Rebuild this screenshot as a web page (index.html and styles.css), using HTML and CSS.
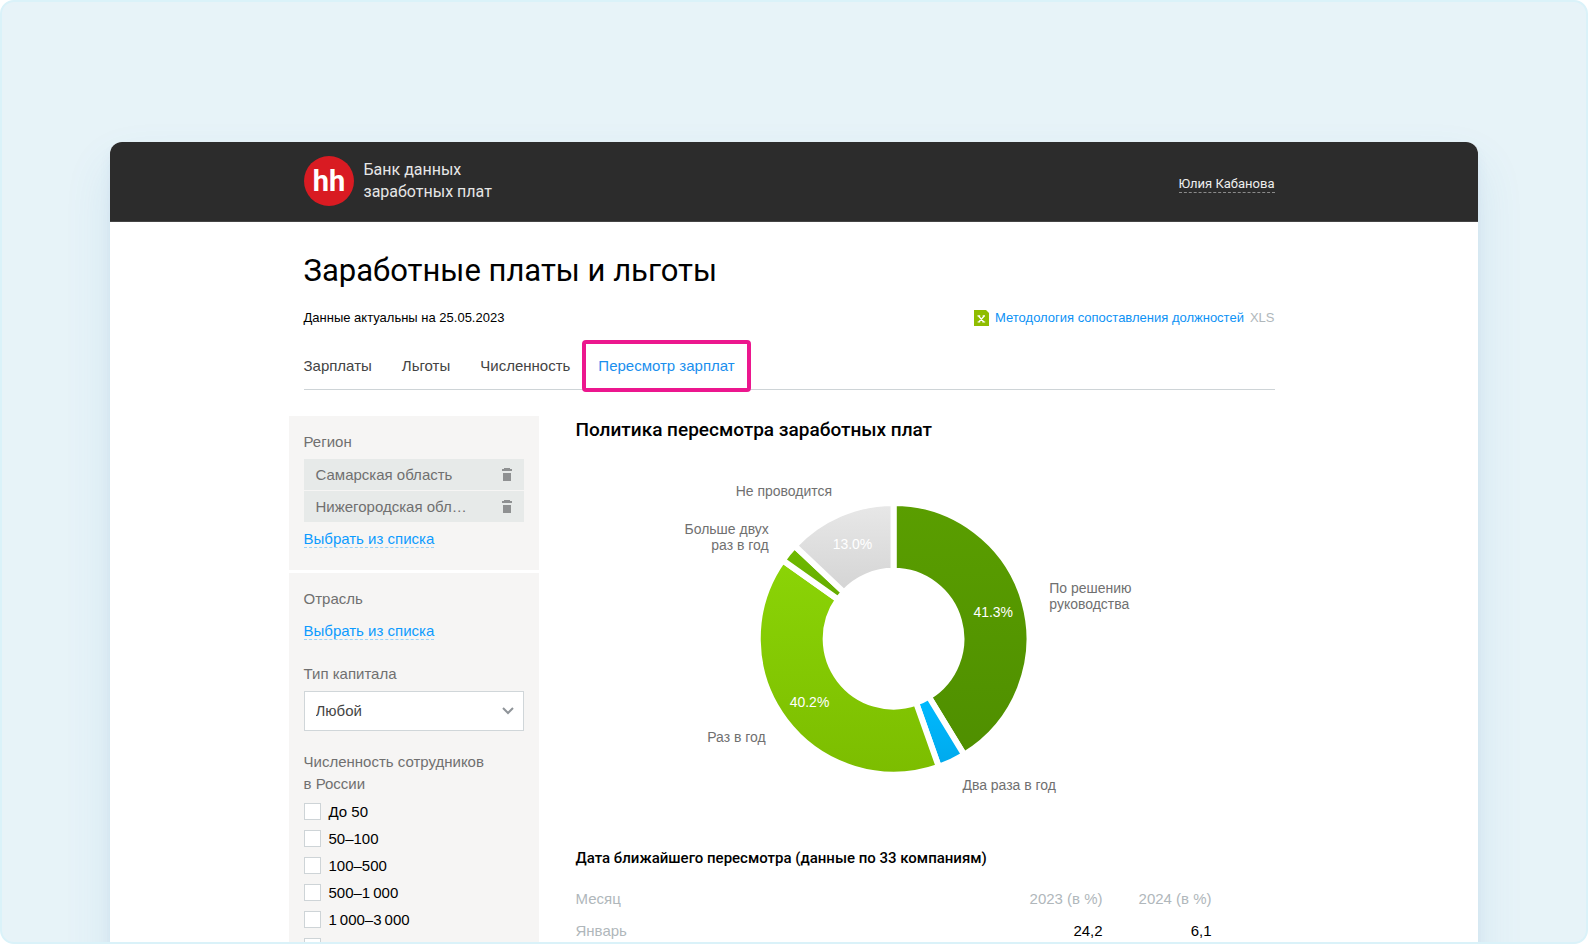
FILE: index.html
```html
<!DOCTYPE html>
<html lang="ru">
<head>
<meta charset="utf-8">
<meta name="viewport" content="width=device-width, initial-scale=1">
<title>Банк данных заработных плат</title>
<link rel="stylesheet" href="styles.css">
</head>
<body>
<div class="stage">
  <div class="window">
    <header class="topbar">
      <div class="topbar-inner">
        <a class="brand" href="#">
          <svg class="brand-logo" viewBox="0 0 50 50" aria-hidden="true">
            <circle cx="25" cy="25" r="25" fill="#d91b22"/>
            <text x="25" y="35" text-anchor="middle" class="brand-mark">hh</text>
          </svg>
          <span class="brand-name">Банк данных<br>заработных плат</span>
        </a>
        <a class="user" href="#">Юлия Кабанова</a>
      </div>
    </header>

    <div class="page">
      <h1 class="title">Заработные платы и льготы</h1>
      <div class="meta">
        <span>Данные актуальны на 25.05.2023</span>
        <div class="method">
          <svg class="xls-icon" viewBox="0 0 15 16" aria-hidden="true">
            <path d="M0 0H12L15 3V16H0Z" fill="#8fbd00"/>
            <path d="M4.500 6L9.800 12M10.200 6L4.800 12M3.500 5.800H6.200M8.700 5.800H11M3.600 12H6.200M8.300 12H11.200" fill="none" stroke="#fff" stroke-width="1.200"/>
          </svg>
          <a class="method-link" href="#">Методология сопоставления должностей</a>
          <span class="method-type">XLS</span>
        </div>
      </div>

      <nav class="tabs">
        <a class="tab" href="#">Зарплаты</a>
        <a class="tab" href="#">Льготы</a>
        <a class="tab" href="#">Численность</a>
        <a class="tab tab-active" href="#" aria-current="page">Пересмотр зарплат</a>
      </nav>

      <div class="columns">
        <aside class="filters">
          <section class="panel">
            <h3 class="filter-title">Регион</h3>
            <ul class="chips">
              <li class="chip"><span class="chip-text">Самарская область</span>
                <button class="chip-remove" type="button" aria-label="Удалить"><svg viewBox="0 0 10 13" width="10" height="13"><path d="M0 1H2V0H8V1H10V3H0ZM1 5H9V13H1Z" fill="#8f9192"/></svg></button></li>
              <li class="chip"><span class="chip-text">Нижегородская обл…</span>
                <button class="chip-remove" type="button" aria-label="Удалить"><svg viewBox="0 0 10 13" width="10" height="13"><path d="M0 1H2V0H8V1H10V3H0ZM1 5H9V13H1Z" fill="#8f9192"/></svg></button></li>
            </ul>
            <a class="pick" href="#">Выбрать из списка</a>
          </section>
          <section class="panel">
            <h3 class="filter-title">Отрасль</h3>
            <a class="pick" href="#">Выбрать из списка</a>
            <label class="filter-title select-title" for="capital">Тип капитала</label>
            <div class="select-wrap">
              <select class="select" id="capital"><option>Любой</option></select>
              <svg class="select-arrow" viewBox="0 0 12 8" aria-hidden="true"><path d="M1 1L6 6L11 1" fill="none" stroke="#8f9499" stroke-width="2"/></svg>
            </div>
            <fieldset class="sizes">
              <legend class="sizes-title">Численность сотрудников<br>в России</legend>
              <label class="check"><input class="box" type="checkbox">До 50</label>
              <label class="check"><input class="box" type="checkbox">50–100</label>
              <label class="check"><input class="box" type="checkbox">100–500</label>
              <label class="check"><input class="box" type="checkbox">500–1&#8201;000</label>
              <label class="check"><input class="box" type="checkbox">1&#8201;000–3&#8201;000</label>
              <label class="check"><input class="box" type="checkbox">3&#8201;000–10&#8201;000</label>
            </fieldset>
          </section>
        </aside>

        <main class="main">
          <h2 class="chart-title">Политика пересмотра заработных плат</h2>
          <svg class="chart" viewBox="0 0 700 360" role="img" aria-label="Политика пересмотра заработных плат">
            <defs>
              <linearGradient id="g-dark" x1="0" y1="0" x2="0" y2="1"><stop offset="0" stop-color="#5a9e00"/><stop offset="1" stop-color="#4f8f00"/></linearGradient>
              <linearGradient id="g-blue" x1="0" y1="0" x2="0" y2="1"><stop offset="0" stop-color="#00baff"/><stop offset="1" stop-color="#00a9ec"/></linearGradient>
              <linearGradient id="g-light" x1="0" y1="0" x2="0" y2="1"><stop offset="0" stop-color="#8bd406"/><stop offset="1" stop-color="#7cbd00"/></linearGradient>
              <linearGradient id="g-green" x1="0" y1="0" x2="0" y2="1"><stop offset="0" stop-color="#70bb00"/><stop offset="1" stop-color="#64ab00"/></linearGradient>
              <linearGradient id="g-gray" x1="0" y1="0" x2="0" y2="1"><stop offset="0" stop-color="#e8e8e8"/><stop offset="1" stop-color="#d4d4d4"/></linearGradient>
            </defs>
            <g transform="translate(318 179)" stroke="#fff" stroke-width="6">
              <path fill="url(#g-dark)" d="M0-136A136 136 0 0 1 70.700 116.200L35.300 58.100A68 68 0 0 0 0-68Z"/>
              <path fill="url(#g-blue)" d="M70.700 116.200A136 136 0 0 1 45.300 128.200L22.600 64.100A68 68 0 0 0 35.300 58.100Z"/>
              <path fill="url(#g-light)" d="M45.300 128.200A136 136 0 0 1-111-78.600L-55.500-39.300A68 68 0 0 0 22.600 64.100Z"/>
              <path fill="url(#g-green)" d="M-111-78.600A136 136 0 0 1-99.100-93.100L-49.600-46.500A68 68 0 0 0-55.500-39.300Z"/>
              <path fill="url(#g-gray)" d="M-99.100-93.100A136 136 0 0 1 0-136L0-68A68 68 0 0 0-49.600-46.500Z"/>
            </g>
            <g class="share">
              <text x="257" y="89">13.0%</text>
              <text x="398" y="157">41.3%</text>
              <text x="214" y="247">40.2%</text>
            </g>
            <g class="label">
              <text x="160" y="36">Не проводится</text>
              <text x="193" y="74" text-anchor="end">Больше двух</text>
              <text x="193" y="90" text-anchor="end">раз в год</text>
              <text x="190" y="282" text-anchor="end">Раз в год</text>
              <text x="474" y="133">По решению</text>
              <text x="474" y="149">руководства</text>
              <text x="387" y="330">Два раза в год</text>
            </g>
          </svg>

          <h3 class="table-title">Дата ближайшего пересмотра (данные по 33 компаниям)</h3>
          <table class="months">
            <thead><tr><th class="month">Месяц</th><th class="num">2023 (в %)</th><th class="num">2024 (в %)</th></tr></thead>
            <tbody><tr><th class="month">Январь</th><td class="num">24,2</td><td class="num">6,1</td></tr></tbody>
          </table>
        </main>
      </div>
    </div>
  </div>
</div>
</body>
</html>
```
FILE: styles.css
```css
* { box-sizing: border-box; }

body {
  margin: 0;
  background: #fff;
  color: #000;
  font: 15px/22px "Liberation Sans", Arial, sans-serif;
}

a { text-decoration: none; }
h1, h2, h3, ul, fieldset { margin: 0; padding: 0; }

.stage {
  height: 100vh;
  overflow: hidden;
  padding: 140px 108px 0;
  border: 2px solid #daf2f9;
  border-radius: 14px;
  background: #e7f3f8;
}

.window {
  min-height: 100%;
  border-radius: 12px 12px 0 0;
  background: #fff;
  box-shadow: 0 24px 48px rgba(60, 140, 190, 0.12), 0 8px 12px rgba(80, 110, 190, 0.07);
}

.topbar {
  border-bottom: 1px solid #444;
  border-radius: 12px 12px 0 0;
  background: #2c2c2c;
}

.topbar-inner,
.page {
  max-width: 981px;
  margin: 0 auto;
  padding-right: 10px;
}

.topbar-inner {
  display: flex;
  align-items: center;
  justify-content: space-between;
  height: 79px;
}

.brand {
  display: flex;
  align-items: center;
  gap: 10px;
  margin-bottom: 2px;
  color: #e6e6e6;
  font: 16px/22px Roboto, sans-serif;
}

.brand-logo { width: 50px; height: 50px; }
.brand-mark { fill: #fff; font: 700 29px Roboto, sans-serif; }

.user {
  margin-top: 6px;
  border-bottom: 1px dashed #8a8a8a;
  color: #eee;
  font: 13px/16px Roboto, sans-serif;
}

.title {
  padding-top: 28px;
  font: 400 31px/42px Roboto, sans-serif;
}

.meta {
  display: flex;
  align-items: center;
  justify-content: space-between;
  margin-top: 15px;
  font-size: 13px;
}

.method { display: flex; align-items: center; gap: 6px; }
.xls-icon { width: 15px; height: 16px; }
.method-link { color: #0d92f5; }
.method-type { color: #b0b7bb; }

.tabs {
  display: flex;
  gap: 30px;
  height: 60px;
  margin-top: 1px;
  border-bottom: 1px solid #ced4d7;
}

.tab { margin-top: 24px; color: #444; line-height: 24px; }

.tab-active {
  z-index: 1;
  height: 52px;
  margin: 10px 0 0 -18px;
  padding: 10px 12px 0;
  border: 4px solid #ec178e;
  border-radius: 4px;
  color: #1a8fee;
}

.columns { display: flex; gap: 37px; margin: 26px 0 0 -15px; }
.filters { flex: 0 0 250px; }

.panel { padding: 15px 15px 20px; background: #f6f5f4; }
.panel + .panel { margin-top: 3px; }

.filter-title {
  display: block;
  color: #707070;
  font-size: 15px;
  font-weight: 400;
  line-height: 22px;
}

.chips {
  display: grid;
  gap: 1px;
  margin: 6px 0;
  list-style: none;
}

.chip {
  display: flex;
  align-items: center;
  justify-content: space-between;
  height: 31px;
  padding: 0 12px;
  background: #e7eae9;
  color: #707070;
}

.chip-text { white-space: nowrap; }

.chip-remove {
  display: flex;
  padding: 0;
  border: 0;
  background: none;
}

.pick {
  display: inline-block;
  border-bottom: 1px dashed #9bd3f7;
  color: #0d9bff;
  line-height: 16px;
}

.filter-title + .pick { margin-top: 13px; }
.select-title { margin: 21px 0 6px; }

.select-wrap { display: grid; align-items: center; }
.select-wrap > * { grid-area: 1 / 1; }

.select {
  width: 100%;
  height: 40px;
  padding: 0 11px;
  border: 1px solid #d0d6d9;
  border-radius: 0;
  background: #fff;
  color: #444;
  font: inherit;
  appearance: none;
}

.select-arrow {
  width: 12px;
  height: 8px;
  margin-right: 10px;
  justify-self: end;
  pointer-events: none;
}

.sizes { margin-top: 20px; border: 0; }
.sizes-title { margin-bottom: 3px; padding: 0; color: #707070; }

.check {
  display: flex;
  align-items: center;
  gap: 8px;
  height: 27px;
}

.box {
  width: 17px;
  height: 17px;
  margin: 0;
  border: 1px solid #ced4d7;
  background: #fff;
  appearance: none;
}

.main { flex: 1; min-width: 0; }
.chart-title { font: 500 19px/28px Roboto, sans-serif; }
.chart { display: block; width: 100%; max-width: 700px; margin-top: 16px; }
.share { fill: #fff; font-size: 14px; }
.label { fill: #707070; font-size: 14px; }

.table-title { margin: 27px 0 13px; font: 500 15px/24px Roboto, sans-serif; }

.months { width: 91%; border-collapse: collapse; }
.months th { color: #b0b7bb; font-weight: 400; }
.months th,
.months td { height: 32px; padding: 0; }
.month { text-align: left; }
.num { width: 109px; text-align: right; }
```
